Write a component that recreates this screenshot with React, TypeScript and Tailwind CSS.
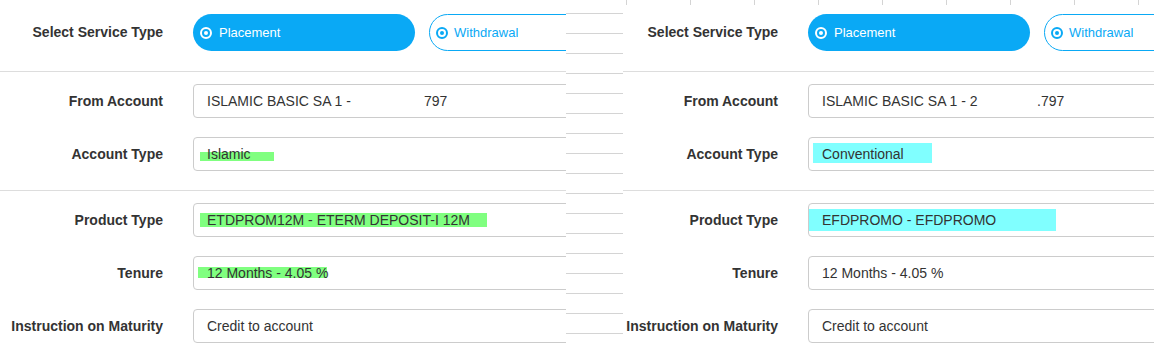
import React from "react";

type Field = {
  label: string;
  value: string;
  suffix?: string;
  suffixAt?: string; // width class of the first span, puts the suffix in place
  hl?: string; // highlighter mark classes
};

function RadioIcon() {
  return (
    <svg width="12" height="12" viewBox="0 0 12 12" className="shrink-0">
      <circle cx="6" cy="6" r="5" fill="none" stroke="currentColor" strokeWidth="2" />
      <circle cx="6" cy="6" r="2" fill="currentColor" />
    </svg>
  );
}

function Row({ field, first }: { field: Field; first?: boolean }) {
  return (
    <div className={`flex items-center gap-[30px] ${first ? "" : "mt-[19px]"}`}>
      <div className="w-[163px] shrink-0 text-right text-[14px] font-bold text-[#333]">
        {field.label}
      </div>
      <div className="relative flex h-[34px] w-[540px] shrink-0 items-center rounded-[4px] border border-[#ccc] bg-white pl-[13px] text-[14px] text-[#333]">
        {/* Highlighter mark behind the text */}
        {field.hl && <span className={`absolute ${field.hl}`} />}
        <span className={`relative whitespace-pre ${field.suffixAt ?? ""}`}>{field.value}</span>
        {field.suffix && <span className="relative">{field.suffix}</span>}
      </div>
    </div>
  );
}

function Form({ top, fields }: { top: string; fields: Field[] }) {
  return (
    <div className="w-[760px] shrink-0">
      {/* Service type */}
      <div className={`flex items-center gap-[30px] border-b border-[#ddd] pb-[20px] ${top}`}>
        <div className="w-[163px] shrink-0 text-right text-[14px] font-bold text-[#333]">
          Select Service Type
        </div>
        <div className="flex gap-[14px]">
          <div className="flex h-[37px] w-[222px] items-center gap-[7px] rounded-full bg-[#0aa9f5] pl-[7px] text-[13px] text-white">
            <RadioIcon />
            Placement
          </div>
          <div className="flex h-[37px] w-[222px] items-center gap-[6px] rounded-full border border-[#0aa9f5] bg-white pl-[6px] text-[13px] text-[#0aa9f5]">
            <RadioIcon />
            Withdrawal
          </div>
        </div>
      </div>

      {/* Account */}
      <div className="border-b border-[#ddd] pt-[12px] pb-[19px]">
        <Row field={fields[0]} first />
        <Row field={fields[1]} />
      </div>

      {/* Product */}
      <div className="pt-[12px]">
        <Row field={fields[2]} first />
        <Row field={fields[3]} />
        <Row field={fields[4]} />
      </div>
    </div>
  );
}

const leftFields: Field[] = [
  { label: "From Account", value: "ISLAMIC BASIC SA 1 -", suffix: "797", suffixAt: "w-[217px]" },
  {
    label: "Account Type",
    value: "Islamic",
    hl: "left-[6px] top-[14px] w-[74px] h-[9px] bg-[#80ff80]",
  },
  {
    label: "Product Type",
    value: "ETDPROM12M - ETERM DEPOSIT-I 12M",
    hl: "left-[6px] top-[9px] w-[287px] h-[14px] bg-[#80ff80]",
  },
  {
    label: "Tenure",
    value: "12 Months - 4.05 %",
    hl: "left-[4px] top-[10px] w-[129px] h-[11px] bg-[#80ff80]",
  },
  { label: "Instruction on Maturity", value: "Credit to account" },
];

const rightFields: Field[] = [
  { label: "From Account", value: "ISLAMIC BASIC SA 1 - 2", suffix: ".797", suffixAt: "w-[215px]" },
  {
    label: "Account Type",
    value: "Conventional",
    hl: "left-[4px] top-[5px] w-[119px] h-[20px] bg-[#80ffff]",
  },
  {
    label: "Product Type",
    value: "EFDPROMO - EFDPROMO",
    hl: "left-0 top-[5px] w-[247px] h-[22px] bg-[#80ffff]",
  },
  { label: "Tenure", value: "12 Months - 4.05 %" },
  { label: "Instruction on Maturity", value: "Credit to account" },
];

export default function App() {
  return (
    <div className="flex h-[351px] w-[1154px] overflow-hidden bg-white font-['Liberation_Sans',Arial,sans-serif]">
      {/* Left screenshot */}
      <div className="w-[566px] shrink-0 overflow-hidden">
        <Form top="pt-[14px]" fields={leftFields} />
      </div>

      {/* Sheet gridlines between the two shots */}
      <div className="flex w-[57px] shrink-0 flex-col pt-[13px]">
        {Array.from({ length: 17 }).map((_, i) => (
          <div key={i} className="h-[20px] shrink-0 border-t border-[#d4d4d4]" />
        ))}
      </div>

      {/* Right screenshot */}
      <div className="flex flex-1 flex-col overflow-hidden">
        <div className="flex h-[5px] shrink-0 gap-[63px] pl-[3px]">
          {Array.from({ length: 9 }).map((_, i) => (
            <div key={i} className="h-[5px] w-px shrink-0 bg-[#d4d4d4]" />
          ))}
        </div>
        <div className="-ml-[8px] flex">
          <Form top="pt-[9px]" fields={rightFields} />
        </div>
      </div>
    </div>
  );
}
